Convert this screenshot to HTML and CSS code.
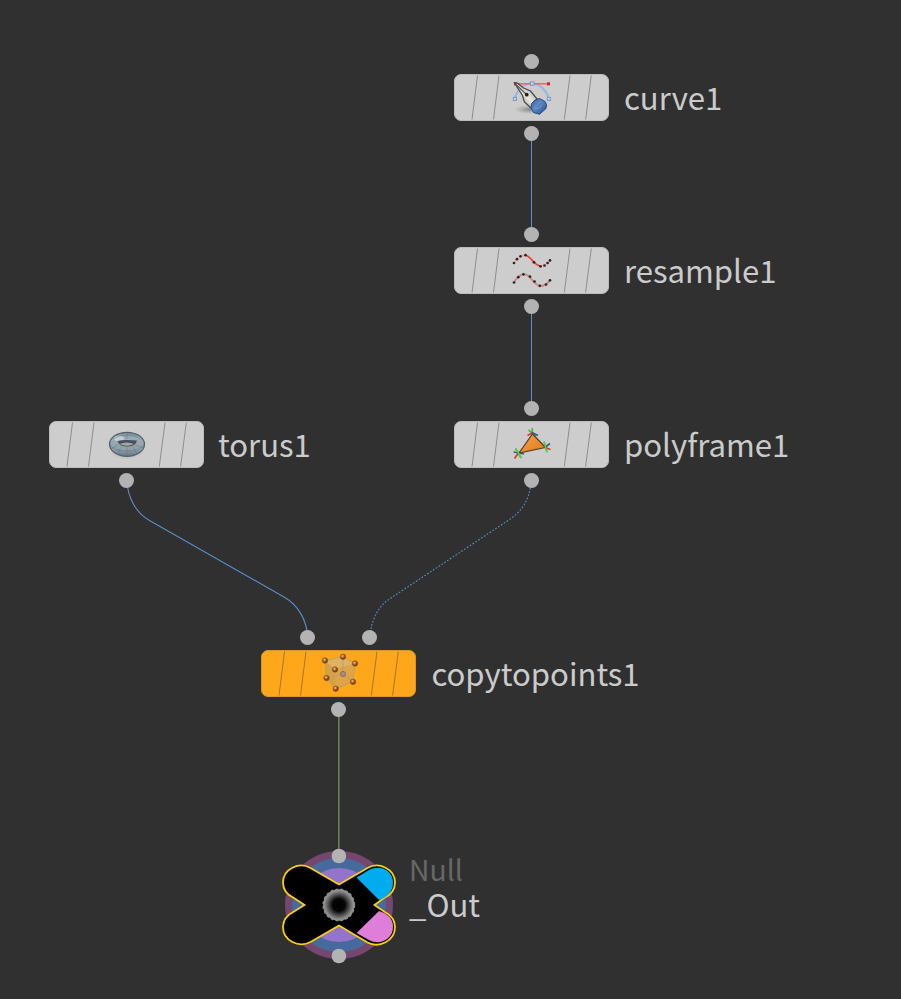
FILE: index.html
```html
<!DOCTYPE html>
<html lang="en">
<head>
<meta charset="utf-8">
<title>Node network</title>
<link rel="stylesheet" href="styles.css">
</head>
<body>
<main class="network">
  <svg class="wires" viewBox="0 0 901 999" aria-hidden="true">
    <path class="wire wire-straight" d="M531.500 134V235M531.500 307V408"/>
    <path class="wire wire-blue" d="M127 481C127.500 497 136 513 149.500 520.500L284 597C298 605 307 620 307.500 637"/>
    <path class="wire wire-blue wire-dotted" d="M531 481C530.500 498 522 512 508 520.500L391 598C378 606 371.500 619 370 637"/>
    <path class="wire wire-green" d="M338.800 710V856"/>
  </svg>

  <section class="node curve">
    <i class="port in"></i><i class="port out"></i>
    <div class="body">
      <svg class="stripes" viewBox="0 0 155 47"><use href="#stripe-lines"/></svg>
      <svg class="icon" viewBox="0 0 54 52">
        <defs>
          <g id="stripe-lines"><path d="M23.500 1.500L18 45.500M45 1.500L39.500 45.500M116 1.500L110.300 45.500M137.300 1.500L131.600 45.500"/></g>
          <radialGradient id="shade"><stop offset="0" stop-color="#555" stop-opacity=".6"/><stop offset="1" stop-color="#777" stop-opacity="0"/></radialGradient>
          <linearGradient id="steel" x1="0" y1="1" x2="1" y2="0"><stop offset="0" stop-color="#80807e"/><stop offset=".5" stop-color="#e8e7e1"/><stop offset="1" stop-color="#8f908c"/></linearGradient>
          <linearGradient id="cap" x1="0" y1="0" x2="1" y2="1"><stop offset="0" stop-color="#2c568f"/><stop offset=".4" stop-color="#5c8ac6"/><stop offset="1" stop-color="#234f90"/></linearGradient>
        </defs>
        <ellipse cx="25" cy="37.500" rx="16" ry="4.500" fill="url(#shade)"/>
        <path d="M10 26Q14 12 27 11.500Q38 12 44 26" fill="none" stroke="#98b9e2" stroke-width="2.200"/>
        <path d="M11 11.800H43" stroke="#df6a6a" stroke-width="1.500"/>
        <rect x="9" y="10.300" width="3" height="3" fill="#a33"/><rect x="42" y="10.300" width="3" height="3" fill="#e01c1c"/>
        <g fill="#b9d2ef" stroke="#6b92c2" stroke-width=".8"><rect x="25.500" y="9.800" width="3.500" height="3.500"/><rect x="8.300" y="25.300" width="3.300" height="3.300"/><rect x="42.300" y="25.300" width="3.300" height="3.300"/></g>
        <path d="M9.500 11L12.500 11.200L18.500 16L25.500 19L32.500 27.500L26 36L19.500 30L17.500 23.500Z" fill="url(#steel)" stroke="#484848" stroke-width="1.300"/>
        <path d="M11 12.500L21.500 22.500" stroke="#555" stroke-width="1.200"/><circle cx="21.700" cy="22.700" r="1.900" fill="#222"/>
        <path d="M26.500 31.500Q29.500 27 34.500 26.500L40 29.500Q42.500 32 41 36.500L34.500 42.300L28.500 40.500L26 35.500Z" fill="url(#cap)" stroke="#254b80"/>
        <path d="M29.500 37Q34.500 37.500 37.500 32.500" fill="none" stroke="#759fd2" stroke-width="1"/>
      </svg>
    </div>
    <span class="label">curve1</span>
  </section>

  <section class="node resample">
    <i class="port in"></i><i class="port out"></i>
    <div class="body">
      <svg class="stripes" viewBox="0 0 155 47"><use href="#stripe-lines"/></svg>
      <svg class="icon" viewBox="0 0 54 52">
        <path d="M9 18Q15 9.500 20.500 10.200C27 11 27 20 35 21.500Q40 22 45 15.500" fill="none" stroke="#dfb5b3" stroke-width="2.200"/>
        <path d="M21 10.500C27 12 28 20 36 21.300" fill="none" stroke="#ef3a37" stroke-width="1.600"/>
        <g class="dots"><circle cx="9" cy="18" r="1.350"/><circle cx="12" cy="14.200" r="1.350"/><circle cx="15.500" cy="11.300" r="1.350"/><circle cx="20.500" cy="10.200" r="1.350"/><circle cx="29" cy="17.300" r="1.350"/><circle cx="35.500" cy="21.300" r="1.350"/><circle cx="39.500" cy="20.500" r="1.350"/><circle cx="42.600" cy="18" r="1.350"/><circle cx="45" cy="15.400" r="1.350"/></g>
        <path d="M9 37.500Q14 29 19.500 29.300C26 29.500 28 40 35 41Q40 41.500 45 35.500" fill="none" stroke="#ca8c8a" stroke-width="2"/>
        <g class="dots"><circle cx="9" cy="37.500" r="1.350"/><circle cx="13.300" cy="32.200" r="1.350"/><circle cx="18.500" cy="29.300" r="1.350"/><circle cx="25" cy="31.700" r="1.350"/><circle cx="29.500" cy="36.500" r="1.350"/><circle cx="34.800" cy="40.800" r="1.350"/><circle cx="41" cy="39.500" r="1.350"/><circle cx="45" cy="35.300" r="1.350"/></g>
      </svg>
    </div>
    <span class="label">resample1</span>
  </section>

  <section class="node polyframe">
    <i class="port in"></i><i class="port out"></i>
    <div class="body">
      <svg class="stripes" viewBox="0 0 155 47"><use href="#stripe-lines"/></svg>
      <svg class="icon" viewBox="0 0 54 52">
        <defs>
          <linearGradient id="orange" x1="0" y1="0" x2="1" y2="1"><stop offset="0" stop-color="#f9a64a"/><stop offset="1" stop-color="#dc791a"/></linearGradient>
        </defs>
        <g fill="none" stroke-width="1.700">
          <path d="M27.300 9V15M23.500 11L31 17M39 22.500L42 33M10.500 29.500L16 39M17.500 30L12 36" stroke="#4fb944"/>
          <path d="M22.500 16.500L28 13.500M36 27L45.500 30.500M13.500 34L9.500 39.500" stroke="#d93a38"/>
          <path d="M27 13.500L33 16.500M40.500 28L45 24.500M8.500 33L19 35" stroke="#365f9d"/>
        </g>
        <path d="M27.500 15L40.500 28.500L14 34Z" fill="url(#orange)" stroke="#5b3c20" stroke-width="1.200"/>
        <path d="M39 23L42 33.500M11 30L16.500 39" fill="none" stroke="#53d13f" stroke-width="1.500"/>
      </svg>
    </div>
    <span class="label">polyframe1</span>
  </section>

  <section class="node torus">
    <i class="port out"></i>
    <div class="body">
      <svg class="stripes" viewBox="0 0 155 47"><use href="#stripe-lines"/></svg>
      <svg class="icon" viewBox="0 0 54 52">
        <defs><linearGradient id="ring" x1="0" y1="0" x2="0" y2="1"><stop offset="0" stop-color="#7b8b96"/><stop offset=".25" stop-color="#9dadb8"/><stop offset=".7" stop-color="#8fa0ab"/><stop offset="1" stop-color="#667987"/></linearGradient></defs>
        <ellipse cx="27" cy="30" rx="18" ry="10.500" fill="url(#shade)"/>
        <ellipse cx="27" cy="25.300" rx="17.500" ry="12" fill="url(#ring)" stroke="#52616b" stroke-width="1.200"/>
        <ellipse cx="19" cy="19.500" rx="5" ry="2.800" fill="#d1dce2" opacity=".7"/>
        <path d="M17.500 22Q21 21 27 21Q33 21 37 21.500Q36 27.500 27 27.500Q19 27.500 17.500 22Z" fill="#465159"/>
        <path d="M19.500 25Q27 22 34 25Q27 28.500 19.500 25Z" fill="#aaa6a6"/>
        <path d="M10 25Q12 32 27 32Q42 32 44 25M13 20Q20 16 27 16Q36 16 41 21M27 13V20M27 28V37M11 30L18 26M43 29L35 26M17 35L21 28M37 35L33 28" fill="none" stroke="#586b78" stroke-width=".7" opacity=".55"/>
      </svg>
    </div>
    <span class="label">torus1</span>
  </section>

  <section class="node copy">
    <i class="port in in-left"></i><i class="port in in-right"></i><i class="port out"></i>
    <div class="body">
      <svg class="stripes" viewBox="0 0 155 47"><use href="#stripe-lines"/></svg>
      <svg class="icon" viewBox="0 0 54 52">
        <defs><radialGradient id="ball" cx=".4" cy=".35"><stop offset="0" stop-color="#f0cda8"/><stop offset=".45" stop-color="#c27c43"/><stop offset="1" stop-color="#793d16"/></radialGradient></defs>
        <path d="M13 12.500L31 8.500L43 15.500L41 33.500L23.500 41L14.500 30Z" fill="#d6a044"/>
        <path d="M13 12.500L31 8.500L43 15.500L23 21.500Z" fill="#dfb160"/><path d="M23 21.500L43 15.500L41 33.500L23.500 41Z" fill="#dea448"/>
        <path d="M13 12.500L31 8.500L43 15.500L41 33.500L23.500 41L14.500 30ZM31 8.500V26M14.500 30L31 26L41 33.500" fill="none" stroke="#b59f6c" stroke-width=".9"/>
        <g fill="url(#ball)" stroke="#864b20" stroke-width=".6"><circle cx="13" cy="12.500" r="2.700"/><circle cx="31" cy="8.800" r="2.700"/><circle cx="43" cy="15.500" r="2.700"/><circle cx="23" cy="21.500" r="2.700"/><circle cx="14.500" cy="30" r="2.700"/><circle cx="41" cy="33.800" r="2.700"/><circle cx="23.700" cy="40.700" r="2.700"/></g>
        <circle cx="31" cy="26" r="2.600" fill="#a58d85" stroke="#805e4d" stroke-width=".7"/>
      </svg>
    </div>
    <span class="label">copytopoints1</span>
  </section>

  <section class="null-node">
    <svg class="flags" viewBox="270 840 140 130" aria-hidden="true">
      <defs>
        <radialGradient id="core"><stop offset="0" stop-color="#000"/><stop offset=".4" stop-color="#060606"/><stop offset=".82" stop-color="#777"/><stop offset="1" stop-color="#a0a0a0"/></radialGradient>
      </defs>
      <circle cx="339" cy="905" r="54" fill="#75476f"/><circle cx="339" cy="905" r="47" fill="#466a9c"/><circle cx="339" cy="905" r="37" fill="#9373cb"/>
      <path d="M339 884.500L367.500 868C379 861.500 395 869 395 882.500Q395 893 384 898L374.500 905L384 911.500Q395 917 395 927C395 941 379 948.500 367.500 942.500L339 925.500L310.500 942C299 948 283 941 283 927Q283 917 294 911.500L304.500 905L294 898Q283 893 283 882.500C283 869 299 861.500 310.500 868Z" fill="#000" stroke="#fbd00d" stroke-width="1.800"/>
      <path d="M356.500 877.500L369 870C380 864 393 870 393 882.500Q393 895 379 900Z" fill="#00abf0"/>
      <path d="M356.500 933L379 911Q393 915 393 927C393 939 380 946 369 940Z" fill="#df7ed9"/>
      <circle cx="338.800" cy="905" r="15.700" fill="url(#core)"/><circle cx="338.800" cy="905" r="15.800" fill="none" stroke="#8b8b8b" stroke-width="1.300" stroke-dasharray="3 2.030"/>
      <circle cx="338.900" cy="856" r="7.300" fill="#b3b3b3"/><circle cx="338.900" cy="956" r="7.300" fill="#b3b3b3"/>
    </svg>
    <div class="null-text"><span class="type">Null</span><span class="name">_Out</span></div>
  </section>
</main>
</body>
</html>
```

FILE: styles.css
```css
* { box-sizing: border-box; }
body { margin: 0; background: #303030; }
.network { position: relative; width: 901px; height: 999px; overflow: hidden; background: #303030; color: #cbcbcb; font: 400 31.1px/40px "Noto Sans CJK SC", sans-serif; }
.wires { position: absolute; inset: 0; width: 901px; height: 999px; }
.wire { fill: none; stroke-width: 1.1; }
.wire-straight { stroke: #5b8dcc; stroke-width: 1; }
.wire-blue { stroke: #5b8dcc; }
.wire-dotted { stroke-dasharray: 1.7 1.7; }
.wire-green { stroke: #728b5e; stroke-width: 1.4; }
.node { position: absolute; display: flex; align-items: center; gap: 15px; height: 47px; }
.curve { left: 454px; top: 74px; }
.resample { left: 454px; top: 247.400px; }
.polyframe { left: 454px; top: 421px; }
.torus { left: 49px; top: 421px; }
.copy { left: 261.400px; top: 650px; }
.body { position: relative; display: flex; justify-content: center; align-items: center; width: 155px; height: 47px; border-radius: 7px; background: #cdcdcd; border: 1px solid #bcbcbc; }
.copy .body { background: #ffa71b; border-color: #dc9527; }
.stripes { position: absolute; left: -1px; top: -1px; width: 155px; height: 47px; fill: none; stroke: #8e8e8e; stroke-width: 1; }
.copy .stripes { stroke: #aa771f; }
.icon { position: relative; width: 54px; height: 52px; flex: none; }
.dots { fill: #2b2626; }
.label { white-space: nowrap; padding-bottom: 1px; }
.torus .label { margin-left: -1px; }
.port { position: absolute; left: 70px; width: 15px; height: 15px; border-radius: 50%; background: #b3b3b3; }
.in { top: -20px; }
.out { top: 52px; }
.in-left { left: 39px; }
.in-right { left: 101px; }
.null-node { position: absolute; display: flex; left: 270px; top: 840px; }
.flags { width: 140px; height: 130px; }
.null-text { display: flex; flex-direction: column; padding-top: 11px; margin-left: -1px; line-height: 35px; }
.type { color: #676767; font-size: 28.3px; }
```
